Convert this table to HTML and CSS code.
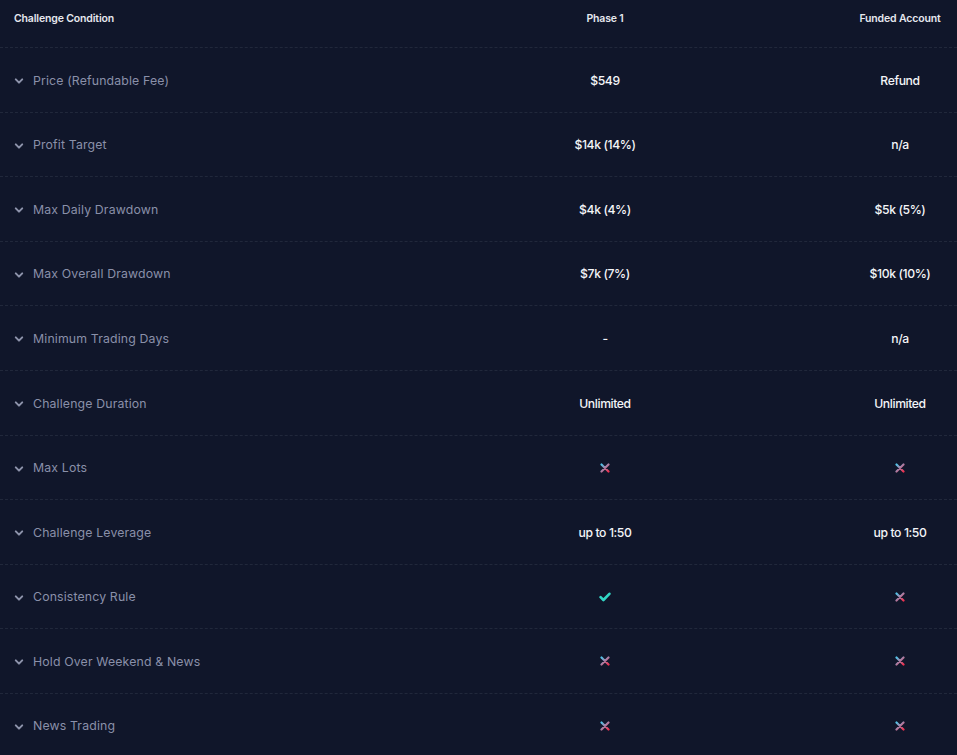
FILE: index.html
```html
<!DOCTYPE html>
<html lang="en">
<head>
<meta charset="utf-8">
<link rel="stylesheet" href="styles.css">
</head>
<body>
<svg width="0" height="0" class="defs" aria-hidden="true">
  <defs>
    <linearGradient id="xg" x1="0" y1="0" x2="1" y2="1">
      <stop offset="0" stop-color="#4fc3e8"/>
      <stop offset="0.5" stop-color="#b07ba0"/>
      <stop offset="1" stop-color="#f0304f"/>
    </linearGradient>
    <symbol id="chev" viewBox="0 0 10 10"><path d="M1.8 3.4 L5 6.6 L8.2 3.4" fill="none" stroke="#8d93ab" stroke-width="2" stroke-linecap="round" stroke-linejoin="round"/></symbol>
    <symbol id="x" viewBox="0 0 10 10"><path d="M1.5 1.5 L8.5 8.5 M8.5 1.5 L1.5 8.5" fill="none" stroke="url(#xg)" stroke-width="2.2" stroke-linecap="round"/></symbol>
    <symbol id="ok" viewBox="0 0 12 10"><path d="M1.6 5.2 L4.4 8 L10.4 1.8" fill="none" stroke="#32d6c5" stroke-width="2.6" stroke-linecap="round" stroke-linejoin="round"/></symbol>
  </defs>
</svg>
<div class="table">
  <div class="row head">
    <div class="cell label">Challenge Condition</div>
    <div class="cell val">Phase 1</div>
    <div class="cell val">Funded Account</div>
  </div>

  <div class="row">
    <div class="cell label"><svg class="chev"><use href="#chev"/></svg>Price (Refundable Fee)</div>
    <div class="cell val">$549</div>
    <div class="cell val">Refund</div>
  </div>
  <div class="row">
    <div class="cell label"><svg class="chev"><use href="#chev"/></svg>Profit Target</div>
    <div class="cell val">$14k (14%)</div>
    <div class="cell val">n/a</div>
  </div>
  <div class="row">
    <div class="cell label"><svg class="chev"><use href="#chev"/></svg>Max Daily Drawdown</div>
    <div class="cell val">$4k (4%)</div>
    <div class="cell val">$5k (5%)</div>
  </div>
  <div class="row">
    <div class="cell label"><svg class="chev"><use href="#chev"/></svg>Max Overall Drawdown</div>
    <div class="cell val">$7k (7%)</div>
    <div class="cell val">$10k (10%)</div>
  </div>
  <div class="row">
    <div class="cell label"><svg class="chev"><use href="#chev"/></svg>Minimum Trading Days</div>
    <div class="cell val">-</div>
    <div class="cell val">n/a</div>
  </div>
  <div class="row">
    <div class="cell label"><svg class="chev"><use href="#chev"/></svg>Challenge Duration</div>
    <div class="cell val">Unlimited</div>
    <div class="cell val">Unlimited</div>
  </div>
  <div class="row">
    <div class="cell label"><svg class="chev"><use href="#chev"/></svg>Max Lots</div>
    <div class="cell val"><svg class="ico-x"><use href="#x"/></svg></div>
    <div class="cell val"><svg class="ico-x"><use href="#x"/></svg></div>
  </div>
  <div class="row">
    <div class="cell label"><svg class="chev"><use href="#chev"/></svg>Challenge Leverage</div>
    <div class="cell val">up to 1:50</div>
    <div class="cell val">up to 1:50</div>
  </div>
  <div class="row">
    <div class="cell label"><svg class="chev"><use href="#chev"/></svg>Consistency Rule</div>
    <div class="cell val"><svg class="ico-ok"><use href="#ok"/></svg></div>
    <div class="cell val"><svg class="ico-x"><use href="#x"/></svg></div>
  </div>
  <div class="row">
    <div class="cell label"><svg class="chev"><use href="#chev"/></svg>Hold Over Weekend &amp; News</div>
    <div class="cell val"><svg class="ico-x"><use href="#x"/></svg></div>
    <div class="cell val"><svg class="ico-x"><use href="#x"/></svg></div>
  </div>
  <div class="row">
    <div class="cell label"><svg class="chev"><use href="#chev"/></svg>News Trading</div>
    <div class="cell val"><svg class="ico-x"><use href="#x"/></svg></div>
    <div class="cell val"><svg class="ico-x"><use href="#x"/></svg></div>
  </div>
</div>
</body>
</html>
```

FILE: styles.css
```css
* { box-sizing: border-box; }
html, body {
  margin: 0;
  padding: 0;
  background: #10162a;
  overflow: hidden;
}
body {
  font-family: Inter, "Noto Sans", sans-serif;
  color: #ffffff;
}
.defs { position: absolute; width: 0; height: 0; }
.table {
  display: flex;
  flex-direction: column;
}
.row {
  display: grid;
  grid-template-columns: 1fr 230px 114px;
  column-gap: 123px;
  align-items: center;
  height: 64.6px;
  padding-top: 0.5px;
  border-bottom: 1px dashed #21283b;
}
.row.head {
  height: 48px;
  align-items: start;
  padding-top: 12px;
}
.cell.label {
  display: flex;
  align-items: center;
  padding-left: 14px;
  font-size: 12.3px;
  color: #8a90a9;
  letter-spacing: 0.15px;
}
.cell.val {
  text-align: center;
  font-size: 12.2px;
  font-weight: 500;
  color: #f4f5f8;
  display: flex;
  justify-content: center;
  align-items: center;
  letter-spacing: -0.4px;
}
.head .cell.label,
.head .cell.val {
  font-size: 10.5px;
  font-weight: 600;
  color: #e6e8ef;
  letter-spacing: -0.15px;
}
.chev {
  width: 10px;
  height: 10px;
  margin-right: 9px;
  margin-top: 2px;
  flex: none;
}
.ico-x {
  width: 10px;
  height: 10px;
}
.ico-ok {
  width: 12px;
  height: 10px;
}
```
